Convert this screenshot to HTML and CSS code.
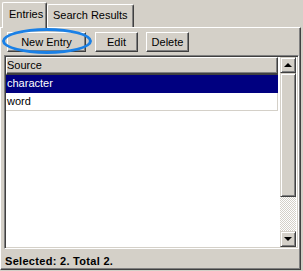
FILE: index.html
```html
<!DOCTYPE html>
<html>
<head>
  <title>Entries</title>
  <link rel="stylesheet" href="styles.css">
</head>
<body>
  <div class="tabs">
    <div class="tab active">Entries</div>
    <div class="tab">Search Results</div>
  </div>
  <div class="panel">
    <div class="toolbar">
      <button class="btn btn-new">New Entry</button>
      <button class="btn btn-edit">Edit</button>
      <button class="btn btn-delete">Delete</button>
      <div class="highlight"></div>
    </div>
    <div class="list">
      <div class="grid">
        <div class="grid-header">Source</div>
        <div class="row selected">character</div>
        <div class="row">word</div>
      </div>
      <div class="scrollbar">
        <div class="sb-btn"><span class="arrow-up"></span></div>
        <div class="sb-track">
          <div class="sb-thumb"></div>
        </div>
        <div class="sb-btn"><span class="arrow-down"></span></div>
      </div>
    </div>
    <div class="status">Selected: 2. Total 2.</div>
  </div>
</body>
</html>
```

FILE: styles.css
```css
body {
  margin: 0;
  width: 303px;
  height: 271px;
  overflow: hidden;
  background: #d4d0c8;
  font-family: "Liberation Sans", Arial, sans-serif;
  font-size: 11px;
  color: #000;
}
.tabs {
  display: flex;
  align-items: flex-end;
  height: 27px;
  padding-left: 2px;
}
.tab {
  box-sizing: border-box;
  height: 23px;
  padding: 4px 5px 0 5px;
  line-height: 13px;
  border: 1px solid;
  border-color: #fff #404040 transparent #fff;
  border-bottom: none;
  border-radius: 2px 2px 0 0;
  box-shadow: inset -1px 0 #808080;
  background: #d4d0c8;
}
.tab.active {
  position: relative;
  z-index: 1;
  width: 45px;
  height: 26px;
  margin-bottom: -1px;
  padding-top: 5px;
  padding-left: 6px;
}
.panel {
  box-sizing: border-box;
  width: 301px;
  height: 243px;
  padding: 0 1px 0 3px;
  border: 1px solid;
  border-color: #fff #404040 #404040 #fff;
  box-shadow: inset -1px -1px #808080;
}
.toolbar {
  position: relative;
  display: flex;
  padding-top: 4px;
  height: 20px;
}
.btn {
  box-sizing: border-box;
  height: 20px;
  padding: 0;
  margin: 0;
  font-family: inherit;
  font-size: 11px;
  line-height: 18px;
  color: #000;
  background: #d4d0c8;
  border: 1px solid;
  border-color: #fff #404040 #404040 #fff;
  box-shadow: inset -1px -1px #808080;
}
.btn-new {
  width: 79px;
  margin-left: 3px;
}
.btn-edit {
  width: 43px;
  margin-left: 9px;
}
.btn-delete {
  width: 43px;
  margin-left: 8px;
}
.highlight {
  position: absolute;
  left: -2px;
  top: 0;
  box-sizing: border-box;
  width: 90px;
  height: 26px;
  border: 3px solid #1a80e6;
  border-radius: 50%;
}
.list {
  box-sizing: border-box;
  display: flex;
  margin-top: 3px;
  height: 194px;
  background: #fff;
  border: 1px solid;
  border-color: #808080 #fff #fff #808080;
  box-shadow: inset 1px 1px #404040, inset -1px -1px #d4d0c8;
  padding: 1px;
}
.grid {
  width: 272px;
}
.grid-header {
  box-sizing: border-box;
  height: 18px;
  line-height: 15px;
  padding-left: 0;
  background: #d4d0c8;
  border: 1px solid;
  border-color: #fff #404040 #404040 #fff;
  border-bottom-width: 2px;
  box-shadow: inset -1px -1px #808080;
}
.row {
  box-sizing: border-box;
  height: 18px;
  line-height: 17px;
  padding-left: 1px;
  border-bottom: 1px solid #d4d0c8;
  border-right: 1px solid #d4d0c8;
}
.row.selected {
  background: #000080;
  color: #fff;
  border-color: #000080;
}
.scrollbar {
  display: flex;
  flex-direction: column;
  width: 16px;
  margin-left: 2px;
}
.sb-btn {
  box-sizing: border-box;
  display: flex;
  align-items: center;
  justify-content: center;
  width: 16px;
  height: 16px;
  background: #d4d0c8;
  border: 1px solid;
  border-color: #d4d0c8 #404040 #404040 #d4d0c8;
  box-shadow: inset 1px 1px #fff, inset -1px -1px #808080;
}
.arrow-up {
  width: 0;
  height: 0;
  border-left: 4px solid transparent;
  border-right: 4px solid transparent;
  border-bottom: 4px solid #000;
}
.arrow-down {
  width: 0;
  height: 0;
  border-left: 4px solid transparent;
  border-right: 4px solid transparent;
  border-top: 4px solid #000;
}
.sb-track {
  flex: 1;
  background-color: #fff;
  background-image: conic-gradient(#d4d0c8 25%, #fff 0 50%, #d4d0c8 0 75%, #fff 0);
  background-size: 2px 2px;
}
.sb-thumb {
  box-sizing: border-box;
  height: 124px;
  background: #d4d0c8;
  border: 1px solid;
  border-color: #d4d0c8 #404040 #404040 #d4d0c8;
  box-shadow: inset 1px 1px #fff, inset -1px -1px #808080;
}
.status {
  padding: 6px 0 0 1px;
  line-height: 13px;
  font-weight: bold;
  letter-spacing: 0.3px;
}
```
